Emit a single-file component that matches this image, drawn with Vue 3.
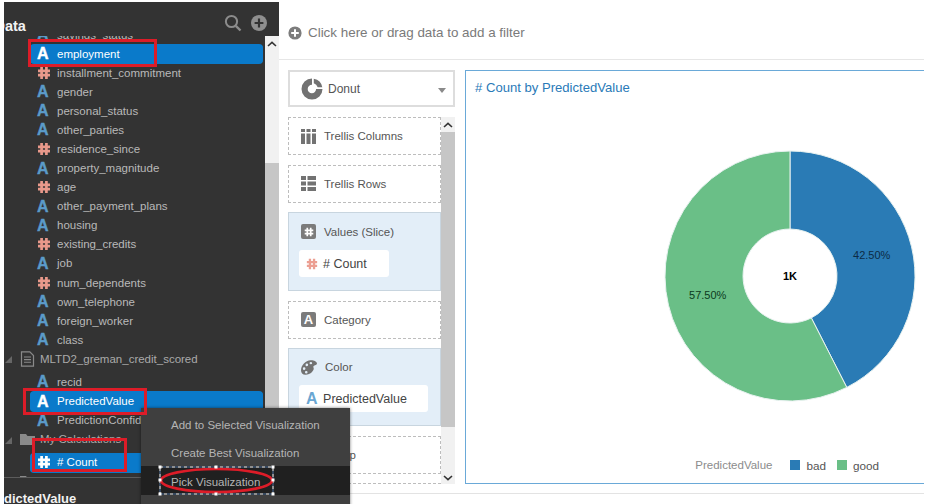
<script setup>
const fields = [
  { name: 'savings_status', type: 'attr' },
  { name: 'employment', type: 'attr', selected: true },
  { name: 'installment_commitment', type: 'num' },
  { name: 'gender', type: 'attr' },
  { name: 'personal_status', type: 'attr' },
  { name: 'other_parties', type: 'attr' },
  { name: 'residence_since', type: 'num' },
  { name: 'property_magnitude', type: 'attr' },
  { name: 'age', type: 'num' },
  { name: 'other_payment_plans', type: 'attr' },
  { name: 'housing', type: 'attr' },
  { name: 'existing_credits', type: 'num' },
  { name: 'job', type: 'attr' },
  { name: 'num_dependents', type: 'num' },
  { name: 'own_telephone', type: 'attr' },
  { name: 'foreign_worker', type: 'attr' },
  { name: 'class', type: 'attr' },
  { name: 'MLTD2_greman_credit_scored', type: 'doc' },
  { name: 'recid', type: 'attr' },
  { name: 'PredictedValue', type: 'attr', selected: true },
  { name: 'PredictionConfidence', type: 'attr' },
  { name: 'My Calculations', type: 'folder' },
  { name: '# Count', type: 'num', selected: true },
  { name: '', type: 'folder' },
]

const slices = [
  { label: 'bad', share: 42.5, color: '#2a7bb5' },
  { label: 'good', share: 57.5, color: '#6abf87' },
]

const cx = 324
const cy = 150
const outer = 125
const inner = 47

function point(r, turn) {
  const a = turn * Math.PI * 2
  return `${(cx + r * Math.sin(a)).toFixed(2)} ${(cy - r * Math.cos(a)).toFixed(2)}`
}

let start = 0
const arcs = slices.map((s) => {
  const end = start + s.share / 100
  const large = s.share > 50 ? 1 : 0
  const d = `M${point(outer, start)}A${outer} ${outer} 0 ${large} 1 ${point(outer, end)}L${point(inner, end)}A${inner} ${inner} 0 ${large} 0 ${point(inner, start)}Z`
  start = end
  return { ...s, d }
})

const handles = [
  [3, 3], [59, 3], [116, 3], [3, 16], [116, 16], [3, 30], [59, 30], [116, 30],
]
</script>

<template>
  <div class="page">
    <aside class="sidebar">
      <header class="side-head">
        <span class="side-title">Data</span>
        <svg class="search" viewBox="0 0 18 18" width="18" height="18">
          <circle cx="7.5" cy="7.5" r="5.6" fill="none" stroke="#8c8c8c" stroke-width="2" />
          <path d="M11.8 11.8L16.5 16.5" stroke="#8c8c8c" stroke-width="2.4" />
        </svg>
        <svg viewBox="0 0 16 16" width="16" height="16">
          <circle cx="8" cy="8" r="8" fill="#8f8f8f" />
          <path d="M8 3.6v8.8M3.6 8h8.8" stroke="#333" stroke-width="2.2" />
        </svg>
      </header>

      <div class="side-body">
        <ul class="tree">
          <li
            v-for="f in fields"
            :key="f.name"
            :class="['row', `row-${f.type}`, { selected: f.selected }]"
          >
            <template v-if="f.type === 'attr'">
              <span class="attr-icon">A</span>
            </template>
            <svg v-else-if="f.type === 'num'" class="hash" viewBox="0 0 14 14" width="14" height="14">
              <path d="M4.6 1v12M9.4 1v12M1 4.8h12M1 9.2h12" stroke="currentColor" stroke-width="2.7" />
            </svg>
            <template v-else>
              <span class="twist"></span>
              <svg v-if="f.type === 'doc'" class="group-icon" viewBox="0 0 15 16" width="15" height="16">
                <path d="M1.5.8h8.3l3.7 3.7v10.7H1.5z" fill="none" stroke="#8a8a8a" stroke-width="1.2" />
                <path d="M4 6h7M4 8.6h7M4 11.2h7" stroke="#8a8a8a" stroke-width="1.1" />
              </svg>
              <svg v-else class="group-icon" viewBox="0 0 15 16" width="15" height="16">
                <path d="M0 3h6l1.5 2H15v9H0z" fill="#8a8a8a" />
              </svg>
            </template>
            <span class="row-label">{{ f.name }}</span>
          </li>
        </ul>
        <div class="side-scroll">
          <div class="arrow-btn">
            <svg viewBox="0 0 10 6" width="10" height="6"><path d="M1 5l4-3.6L9 5" fill="none" stroke="#333" stroke-width="1.6" /></svg>
          </div>
          <div class="side-thumb"></div>
        </div>
      </div>

      <footer class="side-foot"><span>PredictedValue</span></footer>
    </aside>

    <main class="main">
      <div class="filter-bar">
        <svg viewBox="0 0 14 14" width="14" height="14">
          <circle cx="7" cy="7" r="6.6" fill="#7c7c7c" />
          <path d="M7 3.2v7.6M3.2 7h7.6" stroke="#fff" stroke-width="2" />
        </svg>
        <span>Click here or drag data to add a filter</span>
      </div>

      <div class="workspace">
        <div class="config">
          <div class="picker">
            <svg viewBox="0 0 22 22" width="22" height="22">
              <path d="M11 .5A10.5 10.5 0 1 0 21.5 11h-6.4A4.2 4.2 0 1 1 11 6.8z" fill="#727272" />
              <path d="M12.8.7a10.5 10.5 0 0 1 8.5 8.5h-4.6a6.4 6.4 0 0 0-3.9-3.9z" fill="#727272" />
            </svg>
            <span>Donut</span>
            <i class="caret"></i>
          </div>

          <div class="shelf">
            <div class="cards">
              <section class="card">
                <div class="card-head">
                  <svg viewBox="0 0 15 15" width="15" height="15">
                    <path d="M0 0h4v3H0zM5.5 0h4v3h-4zM11 0h4v3h-4zM0 4.5h4V15H0zM5.5 4.5h4V15h-4zM11 4.5h4V15h-4z" fill="#727272" />
                  </svg>
                  <span>Trellis Columns</span>
                </div>
              </section>
              <section class="card">
                <div class="card-head">
                  <svg viewBox="0 0 15 15" width="15" height="15">
                    <path d="M0 0h5v4H0zM6.5 0H15v4H6.5zM0 5.5h5v4H0zM6.5 5.5H15v4H6.5zM0 11h5v4H0zM6.5 11H15v4H6.5z" fill="#727272" />
                  </svg>
                  <span>Trellis Rows</span>
                </div>
              </section>
              <section class="card filled">
                <div class="card-head">
                  <span class="badge">
                    <svg viewBox="0 0 14 14" width="10" height="10">
                      <path d="M4.6 1v12M9.4 1v12M1 4.8h12M1 9.2h12" stroke="#fff" stroke-width="2.4" />
                    </svg>
                  </span>
                  <span>Values (Slice)</span>
                </div>
                <div class="chip">
                  <svg class="chip-hash" viewBox="0 0 14 14" width="12" height="12">
                    <path d="M4.6 1v12M9.4 1v12M1 4.8h12M1 9.2h12" stroke="currentColor" stroke-width="2.7" />
                  </svg>
                  <span># Count</span>
                </div>
              </section>
              <section class="card">
                <div class="card-head">
                  <span class="badge">A</span>
                  <span>Category</span>
                </div>
              </section>
              <section class="card filled color-card">
                <div class="card-head">
                  <svg viewBox="0 0 16 15" width="16" height="15">
                    <path fill-rule="evenodd" fill="#727272" d="M9.5.3C12.8.1 16 1.6 16 3.6c0 1.6-2.6 1.6-3.4 2.4-.9 1 .7 2.2 0 3.6C11.400 12.600 8 15 4.500 14.800 1.500 14.600 0 12.700 0 10.200 0 5.300 4.500.6 9.500.3zM9.800 2.100a1.300 1.100 0 1 0 .1 2.200 1.300 1.100 0 0 0-.1-2.200zM5.800 3.600a1.300 1.300 0 1 0 .1 2.600 1.300 1.300 0 0 0-.1-2.600zM3.100 7.300a1.300 1.300 0 1 0 .1 2.600 1.300 1.300 0 0 0-.1-2.600zM5.200 10.900a1.300 1.300 0 1 0 .1 2.600 1.300 1.300 0 0 0-.1-2.600z" />
                  </svg>
                  <span>Color</span>
                </div>
                <div class="chip wide">
                  <span class="chip-attr">A</span>
                  <span>PredictedValue</span>
                </div>
              </section>
              <section class="card">
                <div class="card-head">
                  <span class="badge">A</span>
                  <span>Group</span>
                </div>
              </section>
              <section class="card"></section>
            </div>
            <div class="shelf-scroll">
              <div class="shelf-btn">
                <svg viewBox="0 0 10 6" width="10" height="6"><path d="M1 5l4-3.600L9 5" fill="none" stroke="#333" stroke-width="1.600" /></svg>
              </div>
              <div class="shelf-thumb"></div>
              <div class="shelf-rest">
                <svg viewBox="0 0 10 6" width="10" height="6"><path d="M1 1l4 3.600L9 1" fill="none" stroke="#333" stroke-width="1.600" /></svg>
              </div>
            </div>
          </div>
        </div>

        <section class="chart">
          <h2 class="chart-title"># Count by PredictedValue</h2>
          <svg class="plot" viewBox="0 0 458 300" width="458" height="300">
            <path v-for="a in arcs" :key="a.label" :d="a.d" :fill="a.color" stroke="#e8f2f0" stroke-width="1" />
            <text x="405.700" y="133" class="pct" fill="#0c2b45">42.50%</text>
            <text x="241.700" y="173" class="pct" fill="#0c3a1e">57.50%</text>
            <text x="324" y="154" class="total">1K</text>
          </svg>
          <div class="legend">
            <span class="legend-name">PredictedValue</span>
            <span v-for="s in slices" :key="s.label" class="legend-item">
              <i class="swatch" :style="{ background: s.color }"></i>{{ s.label }}
            </span>
          </div>
        </section>
      </div>

      <div class="bottom-rule"></div>
    </main>

    <div class="menu">
      <div class="menu-item">Add to Selected Visualization</div>
      <div class="menu-item">Create Best Visualization</div>
      <div class="menu-item active">Pick Visualization</div>
    </div>

    <div class="mark mark-employment"></div>
    <div class="mark mark-predicted"></div>
    <div class="mark mark-count"></div>
    <svg class="mark-pick" viewBox="0 0 120 34" width="120" height="34">
      <rect x="3" y="3" width="113" height="27" fill="none" stroke="#fff" stroke-width="1" stroke-dasharray="3 3" />
      <rect x="3" y="3" width="113" height="27" fill="none" stroke="#4a6f9c" stroke-width="1" stroke-dasharray="3 3" stroke-dashoffset="3" />
      <ellipse cx="59.500" cy="16.500" rx="55.500" ry="11.500" fill="none" stroke="#dd1c28" stroke-width="2.600" />
      <rect v-for="(h, i) in handles" :key="i" :x="h[0] - 1.500" :y="h[1] - 1.500" width="3" height="3" fill="#fff" />
    </svg>
  </div>
</template>

<style scoped>
.page {
  position: relative;
  display: flex;
  width: 933px;
  height: 504px;
  overflow: hidden;
  background: #fff;
  font-family: "Liberation Sans", Arial, sans-serif;
}

/* data panel */
.sidebar {
  display: flex;
  flex-direction: column;
  flex: none;
  width: 275px;
  height: 502px;
  margin: 2px 0 0 4px;
  overflow: hidden;
  background: #333;
}
.side-head {
  display: flex;
  align-items: center;
  gap: 9px;
  flex: none;
  height: 34px;
  padding: 8px 12px 0 0;
  box-sizing: border-box;
}
.side-title {
  margin: 6px auto 0 -9.500px;
  font-size: 14.500px;
  font-weight: 700;
  color: #f2f2f2;
}
.side-body {
  display: flex;
  flex: none;
  height: 441px;
  overflow: hidden;
}
.tree {
  flex: 1;
  margin: -11px 0 0;
  padding: 0;
  list-style: none;
  min-width: 0;
}
.row {
  display: flex;
  align-items: center;
  height: 19.080px;
  margin-left: 26px;
  margin-right: 2px;
  padding-left: 7px;
  font-size: 11.500px;
  color: #b9b9b9;
  white-space: nowrap;
}
.row.selected {
  background: #0a7aca;
  border-radius: 4px;
  box-shadow: 0 1px 0 #0a7aca;
  color: #fff;
}
.attr-icon {
  flex: none;
  width: 13px;
  margin-right: 7px;
  font-size: 16px;
  line-height: 19px;
  font-weight: 700;
  color: #5b9bc9;
  -webkit-text-stroke: .4px currentColor;
}
.selected .attr-icon { color: #fff; }
.hash {
  flex: none;
  width: 14px;
  margin-right: 6px;
  color: #e9998b;
}
.selected .hash { color: #fff; }
.row-doc,
.row-folder {
  margin-left: 1px;
  padding-left: 0;
  margin-bottom: 4px;
  color: #aaa;
}
.twist {
  flex: none;
  width: 0;
  height: 0;
  margin: 2px 8px 0 0;
  border-left: 7px solid transparent;
  border-bottom: 7px solid #666;
}
.group-icon {
  flex: none;
  margin-right: 5px;
}
.side-scroll {
  position: relative;
  flex: none;
  width: 14px;
  background: #f1f1f1;
}
.arrow-btn {
  display: flex;
  justify-content: center;
  padding-top: 5px;
}
.arrow-btn svg { display: block; }
.side-thumb {
  position: absolute;
  top: 127px;
  left: 0;
  right: 0;
  bottom: 0;
  background: #c6c6c6;
}
.side-foot {
  flex: 1;
  padding-top: 13px;
  border-top: 1px solid #5c5c5c;
  overflow: hidden;
  white-space: nowrap;
}
.side-foot span {
  display: block;
  margin-left: -21px;
  font-size: 13px;
  font-weight: 700;
  color: #f2f2f2;
}

/* filter bar */
.main {
  flex: 1;
  min-width: 0;
}
.filter-bar {
  display: flex;
  align-items: center;
  gap: 6px;
  height: 60px;
  box-sizing: border-box;
  padding: 6px 0 0 9px;
  margin-right: 9px;
  border-bottom: 1px solid #e6e6e6;
  font-size: 13.400px;
  color: #7a7a7a;
}
.workspace {
  display: flex;
  gap: 10px;
  height: 414px;
  padding: 10px 9px 0;
}

/* left config column */
.config {
  display: flex;
  flex-direction: column;
  gap: 10px;
  flex: none;
  width: 167px;
}
.picker {
  display: flex;
  align-items: center;
  gap: 5px;
  flex: none;
  height: 37px;
  box-sizing: border-box;
  padding-left: 11px;
  border: 2px solid #ddd;
  font-size: 12px;
  color: #555;
}
.caret {
  width: 0;
  height: 0;
  margin: 3px 7px 0 auto;
  border-left: 4px solid transparent;
  border-right: 4px solid transparent;
  border-top: 5px solid #8a8a8a;
}
.shelf {
  display: flex;
  flex: 1;
  min-height: 0;
  overflow: hidden;
}
.cards {
  display: flex;
  flex-direction: column;
  gap: 9.500px;
  flex: none;
  width: 153px;
}
.card {
  flex: none;
  height: 38px;
  box-sizing: border-box;
  padding: 0 12px;
  border: 1px dashed #bdbdbd;
  font-size: 11.500px;
  color: #555;
}
.card.filled {
  height: 79px;
  padding: 0 10px;
  background: #e3eef8;
  border: 1px solid #c8d5df;
}
.card.color-card { height: 78px; }
.card-head {
  display: flex;
  align-items: center;
  gap: 8px;
  height: 36px;
}
.filled .card-head {
  height: 37px;
  padding: 0 2px;
}
.color-card .card-head { height: 36px; }
.badge {
  display: flex;
  align-items: center;
  justify-content: center;
  flex: none;
  width: 15px;
  height: 15px;
  border-radius: 2px;
  background: #7b7b7b;
  font-size: 13px;
  font-weight: 700;
  color: #fff;
}
.chip {
  display: flex;
  align-items: center;
  gap: 5px;
  width: 90px;
  height: 27px;
  box-sizing: border-box;
  padding-left: 7px;
  border-radius: 3px;
  background: #fff;
  font-size: 12.500px;
  color: #444;
}
.chip.wide {
  width: 129px;
  gap: 5.500px;
}
.chip-hash { color: #ec9f92; }
.chip-attr {
  font-size: 16px;
  font-weight: 700;
  color: #6aa6d2;
}
.shelf-scroll {
  display: flex;
  flex-direction: column;
  flex: none;
  width: 14px;
  background: #f1f1f1;
}
.shelf-btn {
  display: flex;
  justify-content: center;
  flex: none;
  height: 15px;
  padding-top: 5px;
  box-sizing: border-box;
}
.shelf-thumb {
  flex: none;
  height: 295px;
  background: #c6c6c6;
}
.shelf-rest {
  display: flex;
  align-items: flex-end;
  justify-content: center;
  flex: 1;
  padding-bottom: 3px;
}

/* chart */
.chart {
  display: flex;
  flex-direction: column;
  flex: 1;
  min-width: 0;
  border: 1px solid #6aa9d8;
  border-right: 0;
}
.chart-title {
  flex: none;
  height: 55px;
  box-sizing: border-box;
  margin: 0;
  padding: 9px 9px 0;
  font-size: 13.100px;
  font-weight: 400;
  color: #2a7ab8;
}
.plot {
  display: block;
  flex: none;
}
.pct {
  font-size: 11px;
  text-anchor: middle;
}
.total {
  font-size: 11px;
  font-weight: 700;
  text-anchor: middle;
  fill: #000;
}
.legend {
  display: flex;
  align-items: center;
  justify-content: flex-end;
  height: 18px;
  margin-top: 30px;
  padding-right: 45px;
  font-size: 11.700px;
  color: #555;
}
.legend-name {
  margin-right: 18px;
  font-size: 11.500px;
  color: #8c8c8c;
}
.legend-item {
  display: flex;
  align-items: center;
  margin-right: 11px;
}
.legend-item:last-child { margin-right: 0; }
.swatch {
  width: 10px;
  height: 10px;
  margin-right: 6px;
}
.bottom-rule {
  height: 1px;
  margin: 9px 9px 0;
  background: #e3e3e3;
}

/* context menu over the panels */
.menu {
  position: absolute;
  left: 141px;
  top: 408px;
  width: 209px;
  height: 100px;
  padding-top: 3px;
  box-sizing: border-box;
  background: #3f3f3f;
  box-shadow: 0 0 3px rgba(0, 0, 0, .5);
  font-size: 11.500px;
  color: #b5b5b5;
}
.menu-item {
  height: 28px;
  padding-left: 30px;
  line-height: 28px;
}
.menu-item.active {
  height: 29px;
  margin-top: -1.500px;
  background: #202020;
  line-height: 32px;
}

/* red annotations drawn on the screenshot */
.mark {
  position: absolute;
  box-sizing: border-box;
  border: 3px solid #dd1c28;
}
.mark-employment { left: 28px; top: 39px; width: 129px; height: 28px; }
.mark-predicted { left: 23px; top: 388px; width: 124px; height: 27px; }
.mark-count { left: 32px; top: 438px; width: 95px; height: 34px; }
.mark-pick {
  position: absolute;
  left: 157px;
  top: 464px;
}
</style>

<style>
html, body {
  margin: 0;
  overflow: hidden;
  background: #fff;
}
</style>
